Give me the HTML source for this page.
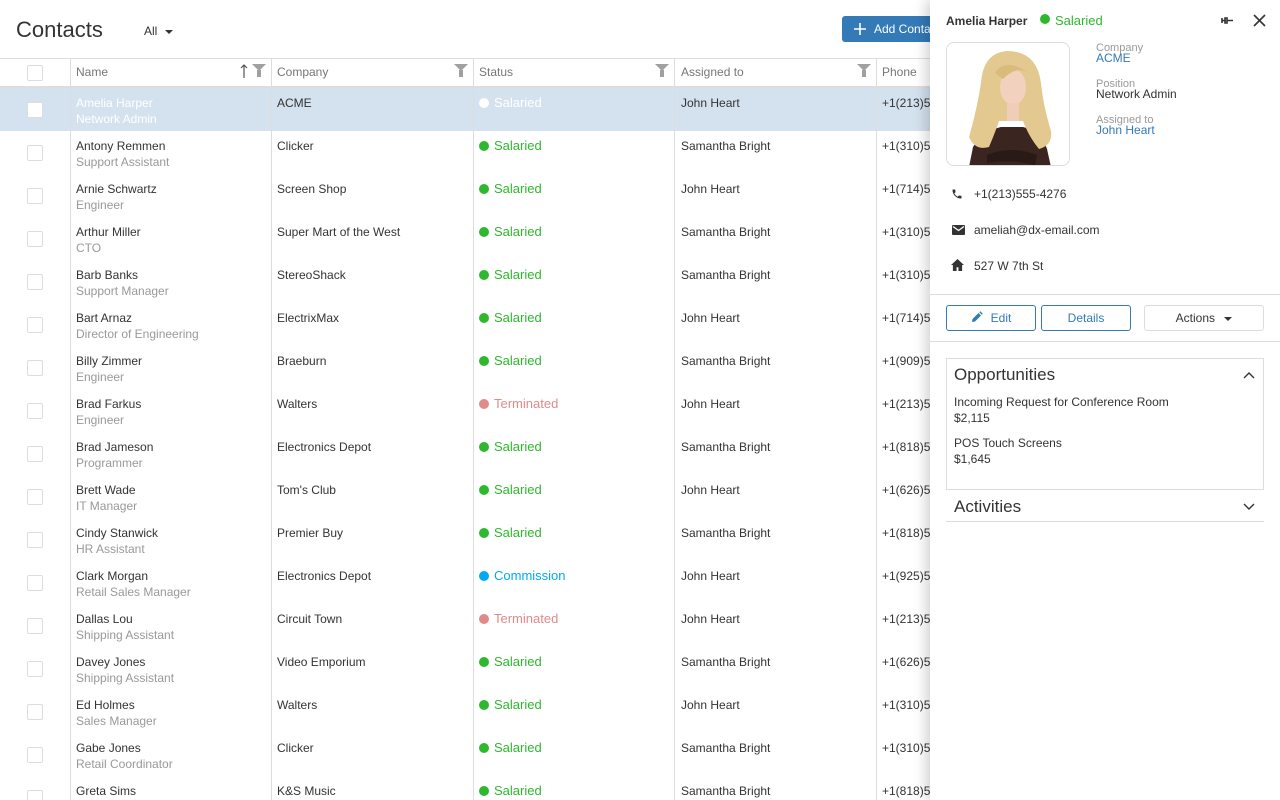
<!DOCTYPE html>
<html style="width:1280px;height:800px;overflow:hidden"><head><meta charset="utf-8"><style>
*{box-sizing:border-box;margin:0;padding:0}
body{width:1280px;height:800px;overflow:hidden;background:#fff;font-family:"Liberation Sans",sans-serif;color:#333;position:relative}
.title{position:absolute;left:16px;top:17px;font-size:22px;color:#333}
.all{position:absolute;left:144px;top:24px;font-size:12px;color:#333}
.all:after{content:"";display:inline-block;margin-left:8px;vertical-align:middle;border:4px solid transparent;border-top-color:#333;border-bottom:0}
.add{position:absolute;left:842px;top:16px;width:120px;height:26px;background:#337ab7;border-radius:3px;color:#fff;font-size:12px;line-height:26px;padding-left:32px}
.hdr{position:absolute;left:0;top:58px;width:1280px;height:30px;border-top:1px solid #ddd;border-bottom:2px solid #ddd}
.vl{position:absolute;top:58px;bottom:0;width:1px;background:#ddd}
.h{position:absolute;top:65px;font-size:12px;color:#767676}
.fil{position:absolute;top:64px;width:0;height:0;border-left:7px solid transparent;border-right:7px solid transparent;border-top:7px solid #a0a0a0}
.fil:after{content:"";position:absolute;left:-2px;top:-1px;width:4px;height:7px;background:#a0a0a0}
.cb{position:absolute;left:27px;width:16px;height:16px;border:1px solid #ddd;border-radius:2px;background:#fff}
.row{position:absolute;left:0;width:1280px;height:43px;overflow:hidden}
.sel{background:#d4e1ee}
.c{position:absolute;font-size:12px;line-height:16px;top:7px}
.sub{color:#999}
.st{position:absolute;top:7px;font-size:13px;line-height:16px;padding-left:15px}
.st:before{content:"";position:absolute;left:0;top:3px;width:10px;height:10px;border-radius:50%;background:currentColor}
.g{color:#2eb82e}.t{color:#e08a8a}.m{color:#03a9f4}
.panel{position:absolute;left:930px;top:0;width:350px;height:800px;background:#fff;box-shadow:-4px 0 12px rgba(0,0,0,.18)}
.p{position:absolute}
.lbl{font-size:11px;color:#999;line-height:12px}
.val{font-size:12px;line-height:13px}
.lnk{color:#337ab7}
.btn{position:absolute;top:305px;height:26px;border-radius:3px;font-size:12px;line-height:24px;text-align:center}
</style></head><body>
<div class="title">Contacts</div>
<div class="all">All</div>
<div class="add"><svg width="12" height="12" viewBox="0 0 12 12" style="position:absolute;left:12px;top:7px"><path d="M6 0v12M0 6h12" stroke="#fff" stroke-width="1.6"/></svg>Add Contact</div>
<div class="hdr"></div>
<div class="cb" style="top:65px"></div>
<div class="h" style="left:76px">Name</div>
<svg style="position:absolute;left:240px;top:64px" width="8" height="14" viewBox="0 0 8 14"><path d="M4 1v13M1 4l3-3 3 3" stroke="#555" stroke-width="1.2" fill="none"/></svg>
<div class="fil" style="left:252px"></div>
<div class="h" style="left:277px">Company</div><div class="fil" style="left:454px"></div>
<div class="h" style="left:479px">Status</div><div class="fil" style="left:655px"></div>
<div class="h" style="left:681px">Assigned to</div><div class="fil" style="left:857px"></div>
<div class="h" style="left:882px">Phone</div>
<div id="rows">
<div class="row sel" style="top:88px"><div class="cb" style="top:14px"></div><div class="c" style="left:76px;color:#fff">Amelia Harper<br>Network Admin</div><div class="c" style="left:277px">ACME</div><div class="st" style="left:479px;color:#fff">Salaried</div><div class="c" style="left:681px">John Heart</div><div class="c" style="left:882px">+1(213)555</div></div>
<div class="row" style="top:131px"><div class="cb" style="top:14px"></div><div class="c" style="left:76px">Antony Remmen<br><span class="sub">Support Assistant</span></div><div class="c" style="left:277px">Clicker</div><div class="st g" style="left:479px">Salaried</div><div class="c" style="left:681px">Samantha Bright</div><div class="c" style="left:882px">+1(310)555</div></div>
<div class="row" style="top:174px"><div class="cb" style="top:14px"></div><div class="c" style="left:76px">Arnie Schwartz<br><span class="sub">Engineer</span></div><div class="c" style="left:277px">Screen Shop</div><div class="st g" style="left:479px">Salaried</div><div class="c" style="left:681px">John Heart</div><div class="c" style="left:882px">+1(714)555</div></div>
<div class="row" style="top:217px"><div class="cb" style="top:14px"></div><div class="c" style="left:76px">Arthur Miller<br><span class="sub">CTO</span></div><div class="c" style="left:277px">Super Mart of the West</div><div class="st g" style="left:479px">Salaried</div><div class="c" style="left:681px">Samantha Bright</div><div class="c" style="left:882px">+1(310)555</div></div>
<div class="row" style="top:260px"><div class="cb" style="top:14px"></div><div class="c" style="left:76px">Barb Banks<br><span class="sub">Support Manager</span></div><div class="c" style="left:277px">StereoShack</div><div class="st g" style="left:479px">Salaried</div><div class="c" style="left:681px">Samantha Bright</div><div class="c" style="left:882px">+1(310)555</div></div>
<div class="row" style="top:303px"><div class="cb" style="top:14px"></div><div class="c" style="left:76px">Bart Arnaz<br><span class="sub">Director of Engineering</span></div><div class="c" style="left:277px">ElectrixMax</div><div class="st g" style="left:479px">Salaried</div><div class="c" style="left:681px">John Heart</div><div class="c" style="left:882px">+1(714)555</div></div>
<div class="row" style="top:346px"><div class="cb" style="top:14px"></div><div class="c" style="left:76px">Billy Zimmer<br><span class="sub">Engineer</span></div><div class="c" style="left:277px">Braeburn</div><div class="st g" style="left:479px">Salaried</div><div class="c" style="left:681px">Samantha Bright</div><div class="c" style="left:882px">+1(909)555</div></div>
<div class="row" style="top:389px"><div class="cb" style="top:14px"></div><div class="c" style="left:76px">Brad Farkus<br><span class="sub">Engineer</span></div><div class="c" style="left:277px">Walters</div><div class="st t" style="left:479px">Terminated</div><div class="c" style="left:681px">John Heart</div><div class="c" style="left:882px">+1(213)555</div></div>
<div class="row" style="top:432px"><div class="cb" style="top:14px"></div><div class="c" style="left:76px">Brad Jameson<br><span class="sub">Programmer</span></div><div class="c" style="left:277px">Electronics Depot</div><div class="st g" style="left:479px">Salaried</div><div class="c" style="left:681px">Samantha Bright</div><div class="c" style="left:882px">+1(818)555</div></div>
<div class="row" style="top:475px"><div class="cb" style="top:14px"></div><div class="c" style="left:76px">Brett Wade<br><span class="sub">IT Manager</span></div><div class="c" style="left:277px">Tom's Club</div><div class="st g" style="left:479px">Salaried</div><div class="c" style="left:681px">John Heart</div><div class="c" style="left:882px">+1(626)555</div></div>
<div class="row" style="top:518px"><div class="cb" style="top:14px"></div><div class="c" style="left:76px">Cindy Stanwick<br><span class="sub">HR Assistant</span></div><div class="c" style="left:277px">Premier Buy</div><div class="st g" style="left:479px">Salaried</div><div class="c" style="left:681px">Samantha Bright</div><div class="c" style="left:882px">+1(818)555</div></div>
<div class="row" style="top:561px"><div class="cb" style="top:14px"></div><div class="c" style="left:76px">Clark Morgan<br><span class="sub">Retail Sales Manager</span></div><div class="c" style="left:277px">Electronics Depot</div><div class="st m" style="left:479px">Commission</div><div class="c" style="left:681px">John Heart</div><div class="c" style="left:882px">+1(925)555</div></div>
<div class="row" style="top:604px"><div class="cb" style="top:14px"></div><div class="c" style="left:76px">Dallas Lou<br><span class="sub">Shipping Assistant</span></div><div class="c" style="left:277px">Circuit Town</div><div class="st t" style="left:479px">Terminated</div><div class="c" style="left:681px">John Heart</div><div class="c" style="left:882px">+1(213)555</div></div>
<div class="row" style="top:647px"><div class="cb" style="top:14px"></div><div class="c" style="left:76px">Davey Jones<br><span class="sub">Shipping Assistant</span></div><div class="c" style="left:277px">Video Emporium</div><div class="st g" style="left:479px">Salaried</div><div class="c" style="left:681px">Samantha Bright</div><div class="c" style="left:882px">+1(626)555</div></div>
<div class="row" style="top:690px"><div class="cb" style="top:14px"></div><div class="c" style="left:76px">Ed Holmes<br><span class="sub">Sales Manager</span></div><div class="c" style="left:277px">Walters</div><div class="st g" style="left:479px">Salaried</div><div class="c" style="left:681px">John Heart</div><div class="c" style="left:882px">+1(310)555</div></div>
<div class="row" style="top:733px"><div class="cb" style="top:14px"></div><div class="c" style="left:76px">Gabe Jones<br><span class="sub">Retail Coordinator</span></div><div class="c" style="left:277px">Clicker</div><div class="st g" style="left:479px">Salaried</div><div class="c" style="left:681px">Samantha Bright</div><div class="c" style="left:882px">+1(310)555</div></div>
<div class="row" style="top:776px;height:24px"><div class="cb" style="top:14px"></div><div class="c" style="left:76px">Greta Sims</div><div class="c" style="left:277px">K&amp;S Music</div><div class="st g" style="left:479px">Salaried</div><div class="c" style="left:681px">Samantha Bright</div><div class="c" style="left:882px">+1(818)555</div></div>
</div>
<div class="vl" style="left:70px"></div><div class="vl" style="left:271px"></div><div class="vl" style="left:473px"></div><div class="vl" style="left:674px"></div><div class="vl" style="left:876px"></div>

<div class="panel">
<div class="p" style="left:16px;top:14px;font-size:12px;font-weight:bold;color:#333">Amelia Harper</div>
<div class="p g" style="left:110px;top:13px;font-size:13px;padding-left:15px"><span style="position:absolute;left:0;top:1px;width:10px;height:10px;border-radius:50%;background:#2eb82e"></span>Salaried</div>
<svg class="p" style="left:291px;top:14px" width="14" height="14" viewBox="0 0 14 14"><path d="M1 4v5M1 6.5h4M4 4h2v5H4zM6 6.5h6" stroke="#333" stroke-width="1.6" fill="none"/></svg>
<svg class="p" style="left:323px;top:14px" width="13" height="13" viewBox="0 0 13 13"><path d="M1 1L12 12M12 1L1 12" stroke="#333" stroke-width="1.6"/></svg>
<div class="p" style="left:16px;top:42px;width:124px;height:124px;border:1px solid #ddd;border-radius:8px;overflow:hidden;background:#fff">
<svg width="124" height="124" viewBox="0 0 124 124">
<path d="M22 124 L26 104 Q36 88 54 84 L76 84 Q94 88 100 106 L104 124Z" fill="#3a2520"/>
<path d="M60 8 Q36 10 34 40 Q30 66 22 94 Q28 108 42 104 Q48 90 52 78 L76 78 Q82 94 92 106 Q106 102 104 88 Q96 62 94 40 Q90 8 60 8Z" fill="#e3c98f"/>
<ellipse cx="66" cy="44" rx="13" ry="18" fill="#f2d2bf"/>
<path d="M48 30 Q58 14 82 30 Q70 22 56 36Z" fill="#d9bb7c"/>
<rect x="60" y="60" width="12" height="18" fill="#efcdb8"/>
<path d="M40 112 Q64 102 90 112 L88 122 Q64 116 40 120Z" fill="#2a1a16"/>
</svg></div>
<div class="p lbl" style="left:166px;top:42px">Company</div>
<div class="p val lnk" style="left:166px;top:52px">ACME</div>
<div class="p lbl" style="left:166px;top:78px">Position</div>
<div class="p val" style="left:166px;top:88px">Network Admin</div>
<div class="p lbl" style="left:166px;top:114px">Assigned to</div>
<div class="p val lnk" style="left:166px;top:124px">John Heart</div>
<svg class="p" style="left:21px;top:188px" width="12" height="12" viewBox="0 0 24 24"><path d="M6.6 10.8c1.4 2.8 3.8 5.1 6.6 6.6l2.2-2.2c.3-.3.7-.4 1-.2 1.1.4 2.3.6 3.6.6.6 0 1 .4 1 1V20c0 .6-.4 1-1 1C10.6 21 3 13.4 3 4c0-.6.4-1 1-1h3.5c.6 0 1 .4 1 1 0 1.3.2 2.5.6 3.6.1.3 0 .7-.2 1z" fill="#333"/></svg>
<div class="p val" style="left:44px;top:188px">+1(213)555-4276</div>
<svg class="p" style="left:22px;top:225px" width="13" height="10" viewBox="0 0 13 10"><rect width="13" height="10" rx="1" fill="#333"/><path d="M1 1.5l5.5 4 5.5-4" stroke="#fff" stroke-width="1.3" fill="none"/></svg>
<div class="p val" style="left:44px;top:224px">ameliah@dx-email.com</div>
<svg class="p" style="left:21px;top:259px" width="13" height="12" viewBox="0 0 14 13"><path d="M7 0L0 6.5h2V13h4V9h2v4h4V6.5h2z" fill="#333"/></svg>
<div class="p val" style="left:44px;top:260px">527 W 7th St</div>
<div class="p" style="left:0;top:294px;width:350px;height:1px;background:#ddd"></div>
<div class="btn" style="left:16px;width:90px;border:1px solid #337ab7;color:#337ab7"><svg width="12" height="12" viewBox="0 0 12 12" style="vertical-align:-1px;margin-right:8px"><path d="M1 11l.5-3 6-6 2.5 2.5-6 6zM8.3 1.2l1-1 2.5 2.5-1 1z" fill="#337ab7"/></svg>Edit</div>
<div class="btn" style="left:111px;width:90px;border:1px solid #337ab7;color:#337ab7">Details</div>
<div class="btn" style="left:214px;width:120px;border:1px solid #ddd;color:#333">Actions <span style="display:inline-block;margin-left:6px;vertical-align:middle;border:4px solid transparent;border-top-color:#333;border-bottom:0"></span></div>
<div class="p" style="left:0;top:341px;width:350px;height:1px;background:#ddd"></div>
<div class="p" style="left:16px;top:358px;width:318px;height:132px;border:1px solid #ddd"></div>
<div class="p" style="left:24px;top:365px;font-size:17px">Opportunities</div>
<svg class="p" style="left:313px;top:371px" width="12" height="8" viewBox="0 0 12 8"><path d="M1 7l5-5 5 5" stroke="#333" stroke-width="1.4" fill="none"/></svg>
<div class="p val" style="left:24px;top:394px;line-height:16px">Incoming Request for Conference Room<br>$2,115</div>
<div class="p val" style="left:24px;top:435px;line-height:16px">POS Touch Screens<br>$1,645</div>
<div class="p" style="left:24px;top:497px;font-size:17px">Activities</div>
<svg class="p" style="left:313px;top:503px" width="12" height="8" viewBox="0 0 12 8"><path d="M1 1l5 5 5-5" stroke="#333" stroke-width="1.4" fill="none"/></svg>
<div class="p" style="left:16px;top:521px;width:318px;height:1px;background:#ddd"></div>
</div>
</body></html>
